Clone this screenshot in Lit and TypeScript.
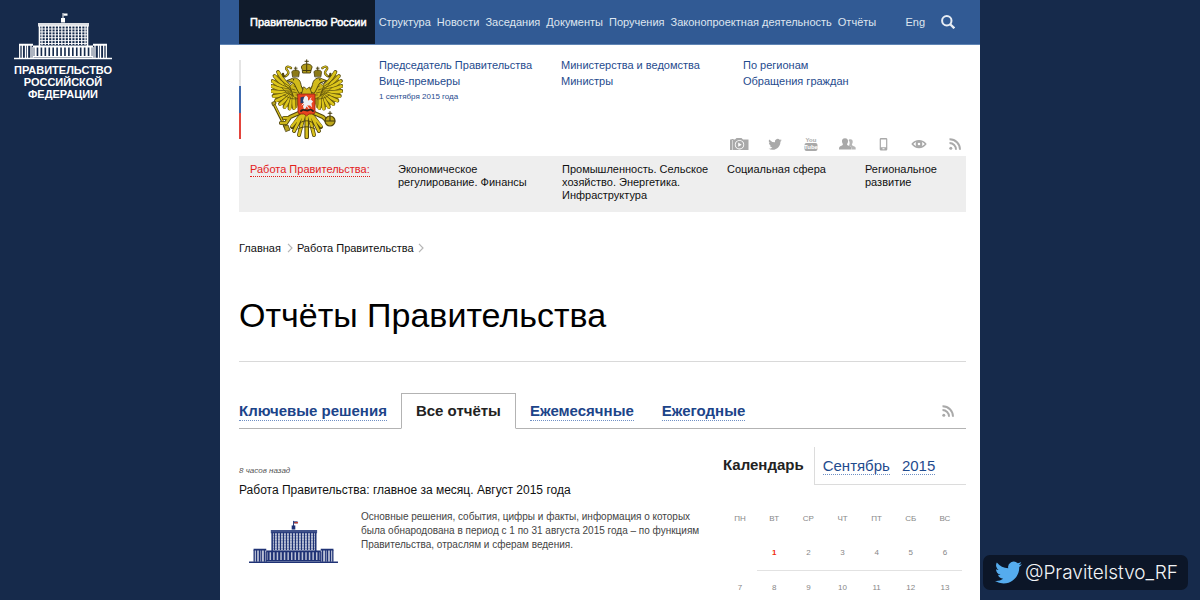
import { LitElement, html, svg, css } from "lit";
import { customElement, property } from "lit/decorators.js";

const range = (n: number) => Array.from({ length: n }, (_, i) => i);

@customElement("gov-building")
export class GovBuilding extends LitElement {
  @property({ type: Boolean }) tricolour = false;

  static styles = css`
    :host { display: block; }
    svg { display: block; width: 100%; height: auto; }
  `;

  render() {
    return html`<svg viewBox="0 0 98 48" fill="none" stroke="currentColor" aria-hidden="true">
      ${this.tricolour
        ? svg`<path d="M25 14h49v20h-49zM19 34h60v12h-60zM5 33h14v13h-14zM79 33h14v13h-14z" fill="currentColor" stroke="none" opacity=".3" />`
        : ""}
      <path d="M49 1v9" stroke-width="1" />
      <path d="M49.500 1.500h4v2.200h-4z" fill="currentColor" stroke="none" />
      ${this.tricolour
        ? svg`<path d="M50 3h4" stroke="#c8402f" stroke-width="1.400" />`
        : ""}
      <path d="M47 6h4v4.500h-4z" fill="currentColor" stroke="none" />
      <path d="M24 11h51v3.500h-51z" fill="currentColor" stroke="none" opacity=".85" />
      <path d="M25 13.800h49" stroke-width="1" opacity=".6" />
      <path d="M25.500 14v20.500M73.500 14v20.500" stroke-width="1.600" />
      ${range(14).map((i) => svg`<path d="M${28 + i * 3.31} 14v19" stroke-width="1.200" />`)}
      ${range(6).map((i) => svg`<path d="M26 ${17 + i * 2.9}h47" stroke-width="1" opacity="${this.tricolour ? 0.35 : 0.9}" />`)}
      <path d="M19 34.500h60" stroke-width="2" />
      ${range(15).map((i) => svg`<path d="M${21.500 + i * 3.93} 35v10" stroke-width="2.300" />`)}
      <path d="M19 44.700h60" stroke-width="1.400" />
      <path d="M5 32.700h14M79 32.700h14" stroke-width="2" />
      <path d="M5.700 33v13M8.300 33v13M11.500 33v13M13.500 33v13M17 33v13M19 35v11M79 35v11M81 33v13M84.500 33v13M86.500 33v13M89.700 33v13M92.300 33v13" stroke-width="1.300" />
      <path d="M0 46.500h98" stroke-width="1.600" />
    </svg>`;
  }
}

@customElement("state-emblem")
export class StateEmblem extends LitElement {
  static styles = css`
    :host { display: block; width: 72px; }
    svg { display: block; width: 100%; height: auto; }
  `;

  private wing() {
    const tips = [
      [7, 13], [3.5, 17], [1.5, 22], [0.8, 27], [1, 32], [2.5, 37], [5, 41.5], [9, 45], [13.5, 48], [18.5, 49.500], [23, 49],
    ];
    return svg`
      <path d="M8 13C1 22-1 34 5 41c5 6 14 9 21 8l5-16-5-8-6 4c-5-3-9-9-12-16z" fill="#a08c16" />
      ${tips.map(([x, y]) => svg`
        <path d="M${x} ${y}Q${(x + 24) / 2 - 2} ${(y + 34) / 2 + 1} 24 32" stroke="#5d500d" stroke-width="3.800" />
        <path d="M${x + 0.3} ${y + 0.3}Q${(x + 24) / 2 - 2} ${(y + 34) / 2 + 1} 24 32" stroke="#dcc51b" stroke-width="2.700" />`)}
      <path d="M12 23c3 5 7 9 13 11M11 29c4 5 8 7 14 8M13 36c4 3 8 4 12 4" stroke="#5d500d" stroke-width=".8" />
      <path d="M19 27c2-3 5-4 8-3l5 5-2 12-7-3z" fill="#cdb61a" stroke="#51450c" stroke-width=".7" />
      <path d="M21 30l3 1M22 33l4 1M23 27l4 2M25 36l4 0" stroke="#51450c" stroke-width=".7" />
      <path d="M34 32c-5-2-3-8-6-11-2-2-5-3-8-1l-4 1.500 4 1.500c4 0 4 5 8 11z" fill="#d2bb1b" stroke="#453b0b" stroke-width=".9" />
      <circle cx="22.500" cy="20.800" r=".7" fill="#2d2608" />
      <path d="M16 21.500l3 3 2-1" stroke="#453b0b" stroke-width="1" />
      <path d="M21.500 17.500l-.5-3.500c-1-2 2-3 3.700-3s4.500 1 3.500 3l-.5 3.500z" fill="#8c7a18" stroke="#453b0b" stroke-width=".8" />
      <path d="M24.700 11V8M23.300 9.200h2.800" stroke="#453b0b" stroke-width=".9" />
      <path d="M20 9c-4-3-6 0-4 2s2 4-1 6c-2 1-3 0-3-2" stroke="#51450c" stroke-width="2.400" />
      <path d="M20 9c-4-3-6 0-4 2s2 4-1 6" stroke="#d4bd20" stroke-width="1.200" />`;
  }

  render() {
    return html`<svg viewBox="0 0 72 80" fill="none" stroke-linecap="round" stroke-linejoin="round" role="img" aria-label="Герб России">
      ${this.wing()}
      <g transform="translate(71.400 0) scale(-1 1)">${this.wing()}</g>
      <path d="M31 10c-2-3 1-5 4.700-5s6.700 2 4.700 5l-1 4h-7.400z" fill="#b09b1a" stroke="#453b0b" stroke-width=".9" />
      <path d="M35.700 5V.8M34 2.300h3.400M35.700 6v7M32 11.500h7.500" stroke="#453b0b" stroke-width="1" />
      <path d="M33 28l2.700 2 2.700-2 3 8h-11z" fill="#cdb61a" stroke="#51450c" stroke-width=".8" />
      <path d="M35.700 56v22" stroke="#51450c" stroke-width="4.600" />
      <path d="M33 56L28 76M38 56l5 20M31 56l-8 16M40 56l8 16M30 56l-9 12M41 56l9 12" stroke="#51450c" stroke-width="4" />
      <path d="M35.700 56v22M33 56L28 76M38 56l5 20M31 56l-8 16M40 56l8 16M30 56l-9 11M41 56l9 11" stroke="#d8c11b" stroke-width="2.500" />
      <path d="M29 64c4-3 9-3 13 0M27 70c5-3 12-3 17 0" stroke="#51450c" stroke-width="1" />
      <path d="M2.500 44.500L15 69.500" stroke="#51450c" stroke-width="2.800" />
      <path d="M3 45L15 69" stroke="#d8c11b" stroke-width="1.200" />
      <path d="M1 43.500l3-1.500 1 3-3 1.500zM13 67l4-1 2 5-4 1.500z" fill="#b9a31b" stroke="#51450c" stroke-width=".8" />
      <path d="M28 54l-9 4-4 6-5 0M18 59l-5 0M43 54l9 4 4 4" stroke="#51450c" stroke-width="4.200" />
      <path d="M28 54l-9 4-4 6-5 0M18 59l-5 0M43 54l9 4 4 4" stroke="#cdb61a" stroke-width="2.400" />
      <circle cx="59" cy="62" r="5" fill="#bda71a" stroke="#51450c" stroke-width="1.200" />
      <path d="M54.200 62h9.600M59 57v-4.500M57.200 54.300h3.600M59 57.500v4" stroke="#453b0b" stroke-width="1.100" />
      <path d="M27 35h17v18q0 2-2 2h-4l-2.500 2-2.500-2h-4q-2 0-2-2z" fill="#e8431f" stroke="#8c2411" stroke-width=".8" />
      <path d="M29.500 38.500l3-1 2 2-1 4-4 1z" fill="#263a68" />
      <path d="M33 38.500l2-2 2 2 0 3 3-1 2 2-1.500 2 .5 4-2-2-3 0-3 4-1-3 1-3-1-3z" fill="#eceef2" />
      <path d="M31 46l3-3M36 47l3 4M40 39l-7 12" stroke="#eceef2" stroke-width="1" />
      <path d="M30 52c3-3 5 1 8-1 2-1 3 0 4 1" stroke="#2b2018" stroke-width="1.800" />
    </svg>`;
  }
}

const TWITTER =
  "M23.950 4.570a10 10 0 0 1-2.820.77 4.960 4.960 0 0 0 2.160-2.720c-.95.55-2 .95-3.120 1.190a4.920 4.920 0 0 0-8.380 4.480A13.930 13.930 0 0 1 1.640 3.160a4.920 4.920 0 0 0 1.520 6.570 4.900 4.900 0 0 1-2.230-.61v.06a4.920 4.920 0 0 0 3.950 4.830 4.900 4.900 0 0 1-2.210.08 4.940 4.940 0 0 0 4.600 3.420A9.870 9.870 0 0 1 0 19.540a13.990 13.990 0 0 0 7.550 2.210c9.050 0 14-7.500 14-13.980 0-.21 0-.42-.02-.63a9.940 9.940 0 0 0 2.420-2.570z";

const feedIcon = html`<svg class="feed" viewBox="0 0 12 12" fill="none" stroke="currentColor" stroke-width="1.900" aria-hidden="true">
  <circle cx="1.800" cy="10.200" r="1.500" fill="currentColor" stroke="none" />
  <path d="M.5 5a6.500 6.500 0 0 1 6.500 6.700M.5 1.200A10.300 10.300 0 0 1 11 11.700" />
</svg>`;

const SOCIAL = [
  { label: "Фото и видео", icon: html`<svg viewBox="0 0 20 14" fill="currentColor"><path fill-rule="evenodd" d="M1 2.500h1.500V2h2v.5h1.500L7.500 1h5L14 2.500h5.500v10.500H1zM10.500 3a4.700 4.700 0 1 0 .01 0zM3.400 3v10h.5V3z" /><path fill-rule="evenodd" d="M10.500 3.800a3.900 3.900 0 1 0 .01 0zM9.200 5.600l3.500 2.100-3.500 2.100z" /></svg>` },
  { label: "Твиттер", icon: html`<svg viewBox="-4 -1 28 21" fill="currentColor"><path transform="scale(.84)" d="${TWITTER}" /></svg>` },
  { label: "Ютьюб", icon: html`<svg viewBox="0 0 20 14"><rect x="3.500" y="6" width="13" height="8" rx="2" fill="currentColor" /><text x="10" y="5" class="yt" fill="currentColor">You</text><text x="10" y="12.300" class="yt" fill="#fff">Tube</text></svg>` },
  { label: "Сообщества", icon: html`<svg viewBox="0 0 20 14" fill="currentColor"><path d="M12 2.500c2.400-1 4 .3 3.700 2.600-.1 1.400-.8 2-.8 2.700 0 1 2.800 1.400 3.400 2.200.5.700.4 2 .4 2.500h-4c0-2.500-.9-3-2.700-3.700.6-1.300 1.300-4-.3-5.300z" opacity=".85" /><path d="M8 1.200c2.300 0 3.200 1.600 3 3.400-.1 1.500-.9 2-.9 2.900 0 1.200 3.200 1.500 3.900 2.500.4.700.4 2 .4 2.500H2c0-.5 0-1.800.4-2.500.7-1 3.500-1.300 3.500-2.500 0-.9-.8-1.400-.9-2.900-.2-1.800.7-3.400 3-3.400z" /></svg>` },
  { label: "Мобильная версия", icon: html`<svg viewBox="0 0 20 14"><path fill="currentColor" fill-rule="evenodd" d="M8 1h5a1.300 1.300 0 0 1 1.300 1.300v9.900a1.300 1.300 0 0 1-1.300 1.300H8a1.300 1.300 0 0 1-1.300-1.300V2.300A1.300 1.300 0 0 1 8 1zM7.900 2.600v7.600h5.200V2.600zM9.500 11.300v1h2v-1z" /></svg>` },
  { label: "Версия для слабовидящих", icon: html`<svg viewBox="0 0 20 14" fill="none" stroke="currentColor"><path d="M3.300 7C6.500 2.500 13.500 2.500 16.700 7c-3.200 4.500-10.200 4.500-13.400 0z" stroke-width="1.500" /><circle cx="10" cy="7" r="2.300" stroke-width="2" /></svg>` },
  { label: "Подписка", icon: feedIcon },
];

@customElement("app-root")
export class AppRoot extends LitElement {
  private nav = ["Структура", "Новости", "Заседания", "Документы", "Поручения", "Законопроектная деятельность", "Отчёты"];
  private areas = ["Экономическое регулирование. Финансы", "Промышленность. Сельское хозяйство. Энергетика. Инфраструктура", "Социальная сфера", "Региональное развитие"];
  private tabs = ["Ключевые решения", "Все отчёты", "Ежемесячные", "Ежегодные"];
  private weeks = [[0, 1, 2, 3, 4, 5, 6], [7, 8, 9, 10, 11, 12, 13]];

  static styles = css`
    :host {
      display: flex;
      position: relative;
      height: 100vh;
      overflow: hidden;
      background: #162a4b;
      color: #111;
      font: 11px/16px "Liberation Sans", Arial, sans-serif;
    }
    * { box-sizing: border-box; }
    a { color: inherit; text-decoration: none; }
    h1, h2, h3, p, ul, ol { margin: 0; padding: 0; font-weight: normal; }
    ul, ol { list-style: none; }
    .side { flex: 1 1 0; min-width: 126px; }
    .brand {
      width: 98px;
      margin: 12px 14px;
      color: #fff;
      text-align: center;
      font-weight: bold;
      line-height: 12px;
    }
    .brand gov-building { margin-bottom: 4px; }
    .page { flex: 0 1 760px; background: #fff; }
    .bar {
      display: flex;
      align-items: center;
      height: 45px;
      padding: 0 19px;
      background: #315a94;
      border-bottom: 1px solid #5f84b4;
      color: #dfe6f0;
    }
    .current {
      display: flex;
      align-items: center;
      align-self: stretch;
      padding: 0 8px 0 11px;
      margin-right: 4px;
      background: #101b2b;
      color: #fff;
      -webkit-text-stroke: 0.5px #fff;
    }
    .menu { display: flex; gap: 6px; white-space: nowrap; }
    .lang { margin-left: auto; }
    .search {
      width: 14px;
      height: 14px;
      margin: 0 6px 0 16px;
      padding: 0;
      border: 0;
      background: none;
      color: #e8edf4;
    }
    .search svg { display: block; }
    .body { padding: 0 14px 0 19px; }
    .head { display: flex; padding-top: 12px; }
    .flag {
      width: 2px;
      height: 79px;
      margin-top: 3px;
      background: linear-gradient(#e4e4e4 33%, #3d68ae 33% 67%, #e2443c 67%);
    }
    .head state-emblem { margin: 2px 36px 0 30px; }
    .info { flex: 1; }
    .links {
      display: grid;
      grid-template-columns: repeat(3, 182px);
      color: #1f4b8e;
    }
    .date { font-size: 8px; }
    .social {
      display: flex;
      justify-content: flex-end;
      gap: 16px;
      margin: 32px 1px 5px 0;
      color: #a9a9a9;
    }
    .social a { display: flex; justify-content: center; align-items: center; width: 20px; height: 14px; }
    .social svg { width: 20px; height: 14px; overflow: visible; }
    .social .feed, .feed { width: 12px; height: 12px; }
    .yt { font: bold 6px "Liberation Sans", sans-serif; text-anchor: middle; }
    .areas {
      display: grid;
      grid-template-columns: 148px 164px 165px 138px 1fr;
      padding: 7px 0 10px 11px;
      background: #eee;
      line-height: 13px;
    }
    .areas a { padding-right: 16px; }
    .areas .lead {
      justify-self: start;
      align-self: start;
      padding: 0;
      color: #e3201b;
      border-bottom: 1px dotted #e3201b;
    }
    .crumbs { display: flex; align-items: center; margin-top: 28px; }
    .crumbs svg { width: 6px; height: 10px; margin: 0 4px 0 6px; }
    .crumbs li { display: flex; align-items: center; }
    .crumbs li + li svg { margin-left: 4px; }
    h1 {
      margin-top: 39px;
      padding-bottom: 26px;
      border-bottom: 1px solid #d9d9d9;
      font-size: 34px;
      line-height: 40px;
      color: #000;
    }
    .tabs {
      display: flex;
      margin-top: 31px;
      font-size: 15px;
      line-height: 18px;
      font-weight: bold;
      color: #1c4489;
    }
    .tabs li { height: 36px; padding: 9px 14px 0; border-bottom: 1px solid #b3b3b3; }
    .tabs li:first-child { padding-left: 0; }
    .tabs .on { padding: 8px 14px 0; border: 1px solid #b3b3b3; border-bottom-color: #fff; color: #222; }
    .tabs .rest { display: flex; flex: 1; justify-content: flex-end; padding: 10px 12px 0 0; color: #a9a9a9; }
    .dotted { display: inline-block; border-bottom: 1px dotted #6f8fc4; }
    .cols { display: grid; grid-template-columns: minmax(0, 1fr) 243px; gap: 16px; }
    .article { padding-top: 36px; }
    .time { display: block; font-size: 8px; line-height: 12px; font-style: italic; color: #555; }
    .article h2 { margin: 5px 0 12px; font-size: 12px; }
    .entry { display: flex; }
    .entry gov-building { flex: 0 0 89px; margin: 10px 23px 0 10px; color: #1f3275; }
    .entry p { font-size: 10px; line-height: 14px; color: #444; }
    .cal { padding-top: 18px; }
    .calhead { display: flex; font-size: 15px; line-height: 18px; }
    .calhead h2 { padding-top: 9px; font-size: 15px; font-weight: bold; color: #222; }
    .pick {
      display: flex;
      flex: 1;
      gap: 12px;
      height: 38px;
      margin-left: 10px;
      padding: 10px 0 9px 8px;
      border: solid #dcdcdc;
      border-width: 0 0 1px 1px;
      color: #1f4b8e;
    }
    table { width: 239px; margin-top: 17px; border-collapse: separate; border-spacing: 0; table-layout: fixed; }
    th, td {
      height: 34px;
      padding: 0;
      text-align: center;
      font-size: 8px;
      line-height: 12px;
      font-weight: normal;
      color: #888;
    }
    td.day { height: 35px; border-bottom: 1px solid #e2e2e2; }
    td.today { color: #f02a10; font-weight: bold; }
    .badge {
      position: absolute;
      right: 12px;
      bottom: 10px;
      display: flex;
      align-items: center;
      gap: 3px;
      height: 35px;
      padding: 0 10px 0 12px;
      border-radius: 7px;
      background: #0c1628;
      color: #f2f4f7;
      font: 300 19px/24px Inter, "Liberation Sans", sans-serif;
    }
    .badge svg { width: 27px; height: 27px; }
  `;

  render() {
    const chevron = html`<svg viewBox="0 0 6 10" fill="none" stroke="#b5b5b5" stroke-width="1.200" aria-hidden="true"><path d="M1 .8L5 5 1 9.200" /></svg>`;
    return html`
      <aside class="side">
        <div class="brand"><gov-building></gov-building>ПРАВИТЕЛЬСТВО<br />РОССИЙСКОЙ<br />ФЕДЕРАЦИИ</div>
      </aside>
      <div class="page">
        <nav class="bar">
          <a class="current" href="#">Правительство России</a>
          <div class="menu">${this.nav.map((t) => html`<a href="#">${t}</a>`)}</div>
          <a class="lang" href="#">Eng</a>
          <button class="search" aria-label="Поиск">
            <svg viewBox="0 0 14 14" fill="none" stroke="currentColor" stroke-width="2"><circle cx="5.800" cy="5.800" r="4.700" /><path d="M9.200 9.200L13.300 13.300" stroke-width="2.300" /></svg>
          </button>
        </nav>
        <div class="body">
          <header class="head">
            <div class="flag"></div>
            <state-emblem></state-emblem>
            <div class="info">
              <div class="links">
                <a href="#">Председатель Правительства</a><a href="#">Министерства и ведомства</a><a href="#">По регионам</a>
                <a href="#">Вице-премьеры</a><a href="#">Министры</a><a href="#">Обращения граждан</a>
                <span class="date">1 сентября 2015 года</span>
              </div>
              <div class="social">${SOCIAL.map((s) => html`<a href="#" aria-label=${s.label}>${s.icon}</a>`)}</div>
            </div>
          </header>
          <nav class="areas">
            <a class="lead" href="#">Работа Правительства:</a>
            ${this.areas.map((t) => html`<a href="#">${t}</a>`)}
          </nav>
          <ol class="crumbs">
            <li><a href="#">Главная</a>${chevron}</li>
            <li><a href="#">Работа Правительства</a>${chevron}</li>
          </ol>
          <h1>Отчёты Правительства</h1>
          <ul class="tabs">
            ${this.tabs.map((t, i) => i === 1
              ? html`<li class="on"><a href="#" aria-current="page">${t}</a></li>`
              : html`<li><a class="dotted" href="#">${t}</a></li>`)}
            <li class="rest"><a href="#" aria-label="Подписка">${feedIcon}</a></li>
          </ul>
          <div class="cols">
            <article class="article">
              <time class="time">8 часов назад</time>
              <h2><a href="#">Работа Правительства: главное за месяц. Август 2015 года</a></h2>
              <div class="entry">
                <gov-building tricolour></gov-building>
                <p>Основные решения, события, цифры и факты, информация о которых была обнародована в период с 1 по 31 августа 2015 года – по функциям Правительства, отраслям и сферам ведения.</p>
              </div>
            </article>
            <section class="cal">
              <div class="calhead">
                <h2>Календарь</h2>
                <div class="pick"><a class="dotted" href="#">Сентябрь</a><a class="dotted" href="#">2015</a></div>
              </div>
              <table>
                <thead><tr>${["ПН", "ВТ", "СР", "ЧТ", "ПТ", "СБ", "ВС"].map((d) => html`<th scope="col">${d}</th>`)}</tr></thead>
                <tbody>
                  ${this.weeks.map((w) => html`<tr>${w.map((d) => html`<td class="${d ? "day" : ""} ${d === 1 ? "today" : ""}">${d || ""}</td>`)}</tr>`)}
                </tbody>
              </table>
            </section>
          </div>
        </div>
      </div>
      <aside class="side"></aside>
      <a class="badge" href="#">
        <svg viewBox="0 0 24 24" fill="#55acee" aria-hidden="true"><path d="${TWITTER}" /></svg>@Pravitelstvo_RF
      </a>
    `;
  }
}
